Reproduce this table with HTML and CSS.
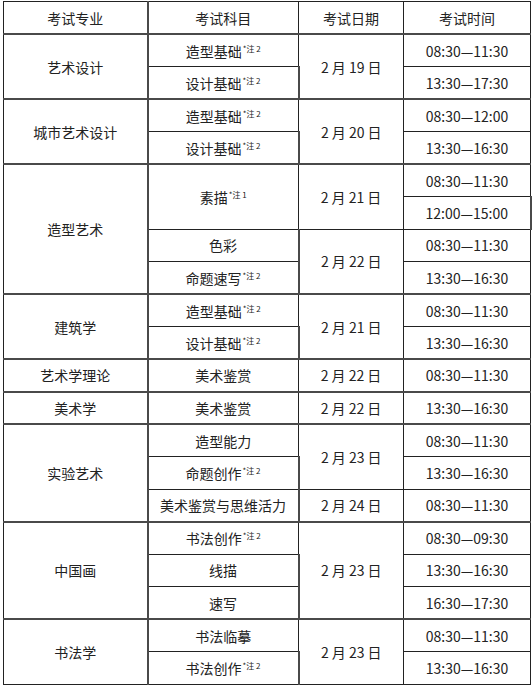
FILE: index.html
```html
<!DOCTYPE html>
<html lang="zh-CN">
<head>
<meta charset="utf-8">
<title>考试安排</title>
<link rel="stylesheet" href="styles.css">
</head>
<body>
<table class="sched">
  <colgroup>
    <col class="c1"><col class="c2"><col class="c3"><col class="c4">
  </colgroup>
  <thead>
    <tr><th>考试专业</th><th>考试科目</th><th>考试日期</th><th>考试时间</th></tr>
  </thead>
  <tbody>
    <tr class="g"><td rowspan="2">艺术设计</td><td>造型基础<sup>*注 2</sup></td><td rowspan="2">2 月 19 日</td><td>08:30—11:30</td></tr>
    <tr><td>设计基础<sup>*注 2</sup></td><td>13:30—17:30</td></tr>
    <tr class="g"><td rowspan="2">城市艺术设计</td><td>造型基础<sup>*注 2</sup></td><td rowspan="2">2 月 20 日</td><td>08:30—12:00</td></tr>
    <tr><td>设计基础<sup>*注 2</sup></td><td>13:30—16:30</td></tr>
    <tr class="g"><td rowspan="4">造型艺术</td><td rowspan="2">素描<sup>*注 1</sup></td><td rowspan="2">2 月 21 日</td><td>08:30—11:30</td></tr>
    <tr><td>12:00—15:00</td></tr>
    <tr><td>色彩</td><td rowspan="2">2 月 22 日</td><td>08:30—11:30</td></tr>
    <tr><td>命题速写<sup>*注 2</sup></td><td>13:30—16:30</td></tr>
    <tr class="g"><td rowspan="2">建筑学</td><td>造型基础<sup>*注 2</sup></td><td rowspan="2">2 月 21 日</td><td>08:30—11:30</td></tr>
    <tr><td>设计基础<sup>*注 2</sup></td><td>13:30—16:30</td></tr>
    <tr class="g"><td>艺术学理论</td><td>美术鉴赏</td><td>2 月 22 日</td><td>08:30—11:30</td></tr>
    <tr class="g"><td>美术学</td><td>美术鉴赏</td><td>2 月 22 日</td><td>13:30—16:30</td></tr>
    <tr class="g"><td rowspan="3">实验艺术</td><td>造型能力</td><td rowspan="2">2 月 23 日</td><td>08:30—11:30</td></tr>
    <tr><td>命题创作<sup>*注 2</sup></td><td>13:30—16:30</td></tr>
    <tr><td>美术鉴赏与思维活力</td><td>2 月 24 日</td><td>08:30—11:30</td></tr>
    <tr class="g"><td rowspan="3">中国画</td><td>书法创作<sup>*注 2</sup></td><td rowspan="3">2 月 23 日</td><td>08:30—09:30</td></tr>
    <tr><td>线描</td><td>13:30—16:30</td></tr>
    <tr><td>速写</td><td>16:30—17:30</td></tr>
    <tr class="g"><td rowspan="2">书法学</td><td>书法临摹</td><td rowspan="2">2 月 23 日</td><td>08:30—11:30</td></tr>
    <tr><td>书法创作<sup>*注 2</sup></td><td>13:30—16:30</td></tr>
  </tbody>
</table>
</body>
</html>
```
FILE: styles.css
```css
html, body {
  margin: 0;
  padding: 0;
  background: #fff;
}
body {
  padding: 1px 0 0 3px;
}
.sched {
  border-collapse: collapse;
  table-layout: fixed;
  width: 527px;
  font-family: "Noto Sans CJK SC", "Noto Sans", sans-serif;
  font-size: 14px;
  color: #222;
  border: 1px solid #222;
}
.c1 { width: 144px; }
.c2 { width: 151px; }
.c3 { width: 105px; }
.c4 { width: 127px; }
.sched tr {
  height: 32.5px;
}
.sched th,
.sched td {
  border: 1px solid #222;
  padding: 0;
  text-align: center;
  vertical-align: middle;
  font-weight: normal;
  line-height: 20px;
  white-space: nowrap;
}
.sched th:nth-child(1),
.sched td:nth-child(1) {
  border-right: 2px solid #4a4a4a;
}
.sched tr.g td {
  border-top: 2px solid #4a4a4a;
}
.sched thead th {
  border-bottom: 2px solid #4a4a4a;
}
.sched sup {
  font-size: 8px;
  line-height: 0;
  vertical-align: 5px;
  margin-left: 1px;
}
```
